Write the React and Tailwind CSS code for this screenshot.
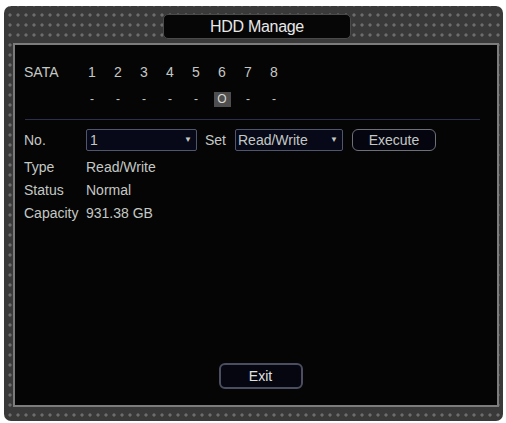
export default function App() {
    const ports = ['1', '2', '3', '4', '5', '6', '7', '8'];
    const label = 'w-[62px] shrink-0';

    return (
        <div className="w-[506px] h-[423px] bg-white pt-[6px] pl-[4px] font-['Liberation_Sans',Arial,sans-serif] text-[14px] text-[#c4c8c4]">
            <div className="w-[499px] h-[415px] rounded-[7px] bg-[#393939] bg-[radial-gradient(circle,#6c6c6c_1.3px,transparent_1.9px)] bg-[length:8px_10px] bg-[position:2px_4px] flex flex-col pl-[9px] pr-[4px]">
                {/* title bar */}
                <div className="h-[37px] flex items-start justify-center pl-[2px]">
                    <div className="w-[188px] h-[25px] mt-[8px] rounded-[5px] bg-[#060606] border border-[#4a4a4a] flex items-center justify-center text-[16px] tracking-[-0.3px] text-[#e8e8e8]">
                        HDD Manage
                    </div>
                </div>

                {/* content panel */}
                <div className="h-[364px] border-2 border-[#7c7c7c] bg-[#050505] flex flex-col pl-[9px]">
                    <div className="mt-[17px] h-[20px] flex items-center">
                        <span className="w-[55px] shrink-0">SATA</span>
                        {ports.map((p) => (
                            <span key={p} className="w-[26px] text-center">{p}</span>
                        ))}
                    </div>
                    <div className="mt-[7px] h-[20px] flex items-center">
                        <span className="w-[55px] shrink-0" />
                        {ports.map((p) => (
                            <span key={p} className="w-[26px] flex justify-center">
                                {p === '6' ? (
                                    <span className="w-[17px] h-[15px] bg-[#4e4e4e] flex items-center justify-center text-[12px] leading-none text-[#d8d8d8]">
                                        O
                                    </span>
                                ) : (
                                    <span className="text-[12px]">-</span>
                                )}
                            </span>
                        ))}
                    </div>

                    <div className="mt-[10px] ml-[1px] w-[455px] h-px bg-[#2c2e4c]" />

                    <div className="mt-[9px] h-[22px] flex items-center">
                        <span className={label}>No.</span>
                        <div className="w-[111px] h-[22px] border border-[#50566c] rounded-[2px] bg-[#070818] flex items-center justify-between pl-[3px] pr-[4px]">
                            <span>1</span>
                            <span className="text-[8px]">▼</span>
                        </div>
                        <span className="ml-[8px] w-[30px]">Set</span>
                        <div className="w-[108px] h-[22px] border border-[#50566c] rounded-[2px] bg-[#070818] flex items-center justify-between pl-[2px] pr-[4px]">
                            <span>Read/Write</span>
                            <span className="text-[8px]">▼</span>
                        </div>
                        <div className="ml-[9px] w-[84px] h-[22px] border border-[#6e7078] rounded-[6px] bg-[#050510] flex items-center justify-center">
                            Execute
                        </div>
                    </div>

                    <div className="mt-[6px] h-[20px] flex items-center">
                        <span className={label}>Type</span>
                        <span>Read/Write</span>
                    </div>
                    <div className="mt-[3px] h-[20px] flex items-center">
                        <span className={label}>Status</span>
                        <span>Normal</span>
                    </div>
                    <div className="mt-[3px] h-[20px] flex items-center">
                        <span className={label}>Capacity</span>
                        <span>931.38 GB</span>
                    </div>

                    <div className="flex-1" />
                    <div className="mb-[16px] flex justify-center">
                        <div className="w-[84px] h-[26px] border-2 border-[#4a4e60] rounded-[6px] bg-[#05060f] flex items-center justify-center text-[#e0e0e0]">
                            Exit
                        </div>
                    </div>
                </div>
            </div>
        </div>
    );
}
